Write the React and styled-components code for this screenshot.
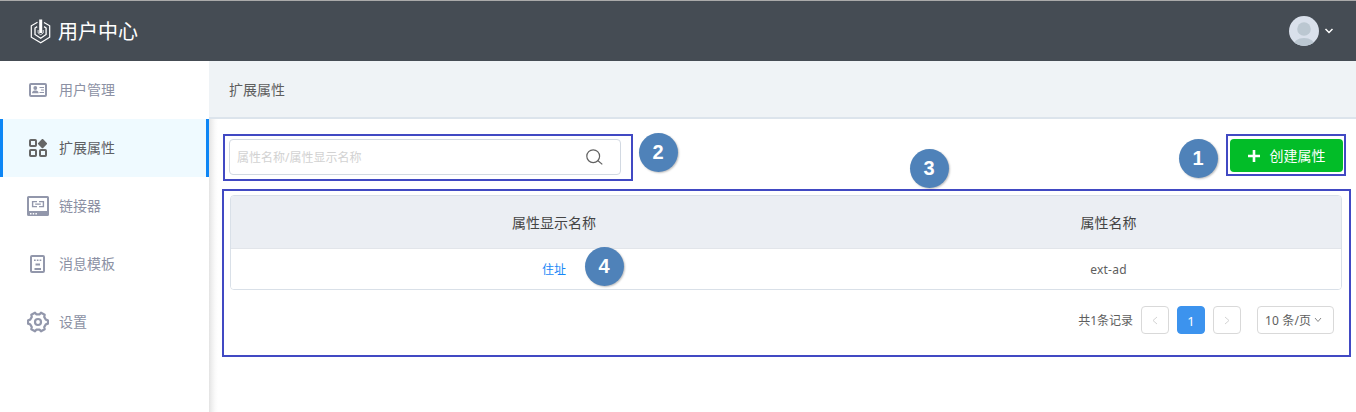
import React from 'react';
import styled, { createGlobalStyle } from 'styled-components';

const GlobalStyle = createGlobalStyle`
  *, *::before, *::after { box-sizing: border-box; }
  body {
    margin: 0;
    overflow: hidden;
    background: #fff;
    color: #5e5e5e;
    font-family: "Noto Sans", "Noto Sans CJK SC", sans-serif;
    font-size: 14px;
  }
  svg { display: block; }
`;

const Page = styled.div`
  display: flex;
  flex-direction: column;
  height: 412px;
`;

const Header = styled.header`
  display: flex;
  align-items: center;
  justify-content: space-between;
  height: 61px;
  padding: 0 22px 0 30px;
  border-top: 1px solid #aaa;
  background: #454c54;
`;

const Brand = styled.div`
  display: flex;
  align-items: center;
  gap: 7px;
  color: #fff;
  font-size: 20px;
  line-height: 28px;
`;

const BrandName = styled.span`
  padding-top: 2px;
`;

const Account = styled.div`
  display: flex;
  align-items: center;
  gap: 5px;
`;

const Body = styled.div`
  display: flex;
  flex: 1;
  min-height: 0;
`;

const Sidebar = styled.nav`
  width: 209px;
  flex: none;
  background: #fff;
`;

const MenuItem = styled.a`
  display: flex;
  align-items: center;
  gap: 9px;
  height: 58px;
  padding-left: 23px;
  border: solid ${(p) => (p.$active ? '#0d86f5' : 'transparent')};
  border-width: 0 3px;
  background: ${(p) => (p.$active ? '#effaff' : '#fff')};
  color: ${(p) => (p.$active ? '#5e6064' : '#8c91a4')};
  line-height: 20px;
`;

const MenuIcon = styled.span`
  display: flex;
  justify-content: center;
  width: 24px;
  color: ${(p) => (p.$active ? '#666' : '#9297ab')};
`;

const Main = styled.main`
  display: flex;
  flex-direction: column;
  flex: 1;
  min-width: 0;
`;

const Breadcrumb = styled.div`
  height: 58px;
  padding-left: 20px;
  border-bottom: 2px solid #dce4ec;
  background: #eff3f6;
  color: #5e5e5e;
  line-height: 57px;
`;

const Content = styled.div`
  flex: 1;
  padding: 15px 5px 0 13px;
  background: linear-gradient(to right, #e3e3e3 0, #f0f0f0 3px, #fafafa 6px, #fff 9px);
`;

const Toolbar = styled.div`
  display: flex;
  align-items: flex-start;
  height: 55px;
  padding: 0 5px 0 1px;
`;

const Frame = styled.div`
  border: 2px solid #4149c3;
  width: ${(p) => p.$width}px;
  height: ${(p) => p.$height}px;
  padding: ${(p) => p.$padding};
`;

const CreateFrame = styled(Frame)`
  margin-left: 8.5px;
`;

const SearchBox = styled.div`
  display: flex;
  align-items: center;
  width: 392px;
  height: 36px;
  padding: 0 17px 0 7px;
  border: 1px solid #d2d9e2;
  border-radius: 4px;
  background: #fff;
`;

const SearchInput = styled.input`
  flex: 1;
  min-width: 0;
  padding: 2px 0 0;
  border: 0;
  outline: 0;
  font: inherit;
  font-size: 12px;
  line-height: 18px;
  background: none;
  &::placeholder { color: #d2d2d2; opacity: 1; }
`;

const CreateButton = styled.button`
  display: flex;
  align-items: center;
  justify-content: center;
  gap: 10px;
  width: 113px;
  height: 33px;
  padding: 0;
  border: 0;
  border-radius: 4px;
  background: #02bd28;
  color: #fff;
  font: inherit;
  line-height: 20px;
`;

const Badge = styled.span`
  flex: none;
  width: 39px;
  height: 39px;
  border-radius: 50%;
  background: #4f82b9;
  box-shadow: 1px 1px 2px rgba(0, 0, 0, 0.25);
  color: #fff;
  font: bold 20px/38px "Liberation Sans", sans-serif;
  text-align: center;
`;

const SearchBadge = styled(Badge)`
  margin: -1.5px auto 0 5.5px;
`;

const CreateBadge = styled(Badge)`
  margin-top: 4.5px;
`;

const TableBadge = styled(Badge)`
  position: absolute;
  left: 909.5px;
  top: 148.5px;
`;

const RowBadge = styled(Badge)`
  position: absolute;
  left: 584.5px;
  top: 246.5px;
`;

const Table = styled.div`
  width: 1112px;
  height: 95px;
  border: 1px solid #d9e0e8;
  border-radius: 4px;
  overflow: hidden;
  background: #fff;
`;

const Row = styled.div`
  display: grid;
  grid-template-columns: 646px 463px;
  height: ${(p) => (p.$head ? 53 : 40)}px;
  border-bottom: ${(p) => (p.$head ? '1px solid #e2e5ea' : '0')};
  background: ${(p) => (p.$head ? '#ebeef3' : '#fff')};
  color: ${(p) => (p.$head ? '#444' : '#5e5e5e')};
  font-size: ${(p) => (p.$head ? 14 : 12)}px;
  line-height: ${(p) => (p.$head ? 54 : 41)}px;
  text-align: center;
`;

const Link = styled.a`
  color: #1787f7;
`;

const Latin = styled.span`
  letter-spacing: 0.25px;
`;

const Pager = styled.div`
  display: flex;
  align-items: center;
  justify-content: flex-end;
  gap: 8px;
  padding: 16px 8px 0 0;
  font-size: 12px;
`;

const Total = styled.span`
  padding-top: 2px;
  line-height: 18px;
`;

const PageButton = styled.span`
  display: flex;
  align-items: center;
  justify-content: center;
  width: 28px;
  height: 28px;
  border: 1px solid ${(p) => (p.$current ? '#3c93ee' : '#d9d9d9')};
  border-radius: 4px;
  background: ${(p) => (p.$current ? '#3c93ee' : '#fff')};
  color: ${(p) => (p.$current ? '#fff' : '#d4d4d4')};
  padding-top: ${(p) => (p.$current ? 2 : 0)}px;
  font-size: 13px;
  line-height: 26px;
`;

const PageSize = styled.span`
  display: flex;
  align-items: center;
  gap: 3px;
  width: 77px;
  height: 28px;
  margin-left: 8px;
  padding-left: 7px;
  letter-spacing: 0.15px;
  border: 1px solid #d9d9d9;
  border-radius: 4px;
  white-space: nowrap;
`;

const Chevron = ({ width, height, points, weight = 1, color = 'currentColor' }) => (
  <svg width={width} height={height} fill="none" stroke={color} strokeWidth={weight}>
    <polyline points={points} />
  </svg>
);

const Logo = () => (
  <svg width="21" height="25" viewBox="0 0 21 25" fill="none" stroke="#fff">
    <path d="M7.5 3.2 1.3 6.8v11.4l9.4 5.5 9-5.5V6.8L14 3.4" strokeWidth="1.2" />
    <path d="M7.2 7.600 5 9v6.500l5.700 3.700 5.400-3.700V9l-2-1.400" strokeWidth="1.300" />
    <path d="M10.700.5v13.500" strokeWidth="3" />
    <path d="M8.100 11v3l2.600 1.700 2.500-1.700v-3" strokeWidth=".8" />
  </svg>
);

const UserCardIcon = () => (
  <svg width="18" height="14" viewBox="0 0 18 14">
    <rect x="1" y="1" width="16" height="12" rx="1" fill="none" stroke="currentColor" strokeWidth="2" />
    <circle cx="6.3" cy="5" r="1.9" fill="currentColor" />
    <path d="M3 10.2c0-2 1.3-2.5 2.5-2.8h1.6c1.2.3 2.5.8 2.5 2.8z" fill="currentColor" />
    <path d="M10.500 4.500H15M12 7h3M10.500 9.500H15" stroke="currentColor" />
  </svg>
);

const BlocksIcon = () => (
  <svg width="18" height="18" viewBox="0 0 18 18" fill="none" stroke="currentColor" strokeWidth="2">
    <rect x="1" y="1" width="6" height="6" rx=".8" />
    <rect x="1" y="11" width="6" height="6" rx=".8" />
    <rect x="11" y="11" width="6" height="6" rx=".8" />
    <path d="m13.500 1 3.600 3.600-3.600 3.600-3.600-3.600z" fill="currentColor" strokeLinejoin="round" />
  </svg>
);

const LinkerIcon = () => (
  <svg width="22" height="20" viewBox="0 0 22 20">
    <path
      fillRule="evenodd"
      d="M1.500 0h19Q22 0 22 1.500v17q0 1.500-1.500 1.500h-19Q0 20 0 18.500v-17Q0 0 1.500 0zM2 2v13h18V2zM3 17v1.500h1.500V17zM5.700 17v1.500h1.500V17zM8.400 17v1.500h1.500V17z"
      fill="currentColor"
    />
    <path d="M10 5.600H5.600v5H10M12 5.600h4.400v5H12M8.200 8.100h5.600" fill="none" stroke="currentColor" strokeWidth="1.400" />
  </svg>
);

const TemplateIcon = () => (
  <svg width="16" height="18" viewBox="0 0 16 18" fill="none" stroke="currentColor">
    <rect x="1" y="1" width="13" height="16" rx="1" strokeWidth="2" />
    <path d="M4 5.200h7.500" strokeWidth="1.400" strokeDasharray="1.700 1.100" />
    <path d="M5.500 9.500h4.500M4.500 14h6.500" strokeWidth="1.800" />
  </svg>
);

const GearIcon = () => (
  <svg width="22" height="22" viewBox="0 0 22 22" fill="none" stroke="currentColor" strokeWidth="2.200">
    <path
      strokeLinejoin="round"
      d="M8 1.700 9.300 3.300H12.700L14 1.700 17.700 3.800 17.200 5.900 18.800 8.600 20.900 9.300V12.700L18.800 13.400 17.200 16.100 17.700 18.200 14 20.300 12.700 18.700H9.300L8 20.300 4.300 18.200 4.800 16.100 3.200 13.400 1.100 12.700V9.300L3.200 8.600 4.800 5.900 4.300 3.800z"
    />
    <circle cx="11" cy="11" r="3" />
  </svg>
);

const SearchIcon = () => (
  <svg width="17" height="16" viewBox="0 0 17 16" fill="none" stroke="#626262" strokeWidth="1.200">
    <circle cx="7.200" cy="7.200" r="6.400" />
    <path d="m11.700 11.500 4.600 3.900" />
  </svg>
);

const PlusIcon = () => (
  <svg width="12" height="12" stroke="#fff" strokeWidth="2.600">
    <path d="M0 6h12M6 0v12" />
  </svg>
);

const Avatar = () => (
  <svg width="30" height="30" viewBox="0 0 30 30">
    <clipPath id="avatar">
      <circle cx="15" cy="15" r="15" />
    </clipPath>
    <g clipPath="url(#avatar)">
      <rect width="30" height="30" fill="#d9e0eb" />
      <circle cx="15" cy="13" r="6.800" fill="#bbc7d1" />
      <ellipse cx="15" cy="30" rx="11" ry="8" fill="#bbc7d1" />
    </g>
  </svg>
);

const menu = [
  { label: '用户管理', icon: UserCardIcon },
  { label: '扩展属性', icon: BlocksIcon, active: true },
  { label: '链接器', icon: LinkerIcon },
  { label: '消息模板', icon: TemplateIcon },
  { label: '设置', icon: GearIcon },
];

export default function App() {
  return (
    <Page>
      <GlobalStyle />
      <Header>
        <Brand>
          <Logo />
          <BrandName>用户中心</BrandName>
        </Brand>
        <Account>
          <Avatar />
          <Chevron width={10} height={6} points="1.5,1 5,4.5 8.5,1" weight={1.5} color="#fff" />
        </Account>
      </Header>
      <Body>
        <Sidebar>
          {menu.map(({ label, icon: Icon, active }) => (
            <MenuItem key={label} $active={active}>
              <MenuIcon $active={active}>
                <Icon />
              </MenuIcon>
              {label}
            </MenuItem>
          ))}
        </Sidebar>
        <Main>
          <Breadcrumb>扩展属性</Breadcrumb>
          <Content>
            <Toolbar>
              <Frame $width={410} $height={47} $padding="3px 4px">
                <SearchBox>
                  <SearchInput placeholder="属性名称/属性显示名称" />
                  <SearchIcon />
                </SearchBox>
              </Frame>
              <SearchBadge>2</SearchBadge>
              <CreateBadge>1</CreateBadge>
              <CreateFrame $width={120} $height={42} $padding="3px 1px 0 2px">
                <CreateButton>
                  <PlusIcon />
                  创建属性
                </CreateButton>
              </CreateFrame>
            </Toolbar>
            <Frame $width={1129} $height={168} $padding="4px 7px 0 6px">
              <Table>
                <Row $head>
                  <span>属性显示名称</span>
                  <span>属性名称</span>
                </Row>
                <Row>
                  <Link>住址</Link>
                  <Latin>ext-ad</Latin>
                </Row>
              </Table>
              <Pager>
                <Total>共1条记录</Total>
                <PageButton>
                  <Chevron width={6} height={9} points="5,1 1,4.5 5,8" />
                </PageButton>
                <PageButton $current>1</PageButton>
                <PageButton>
                  <Chevron width={6} height={9} points="1,1 5,4.5 1,8" />
                </PageButton>
                <PageSize>
                  10 条/页
                  <Chevron width={8} height={6} points="1,1 4,4.5 7,1" color="#888" />
                </PageSize>
              </Pager>
            </Frame>
          </Content>
        </Main>
      </Body>
      <TableBadge>3</TableBadge>
      <RowBadge>4</RowBadge>
    </Page>
  );
}
